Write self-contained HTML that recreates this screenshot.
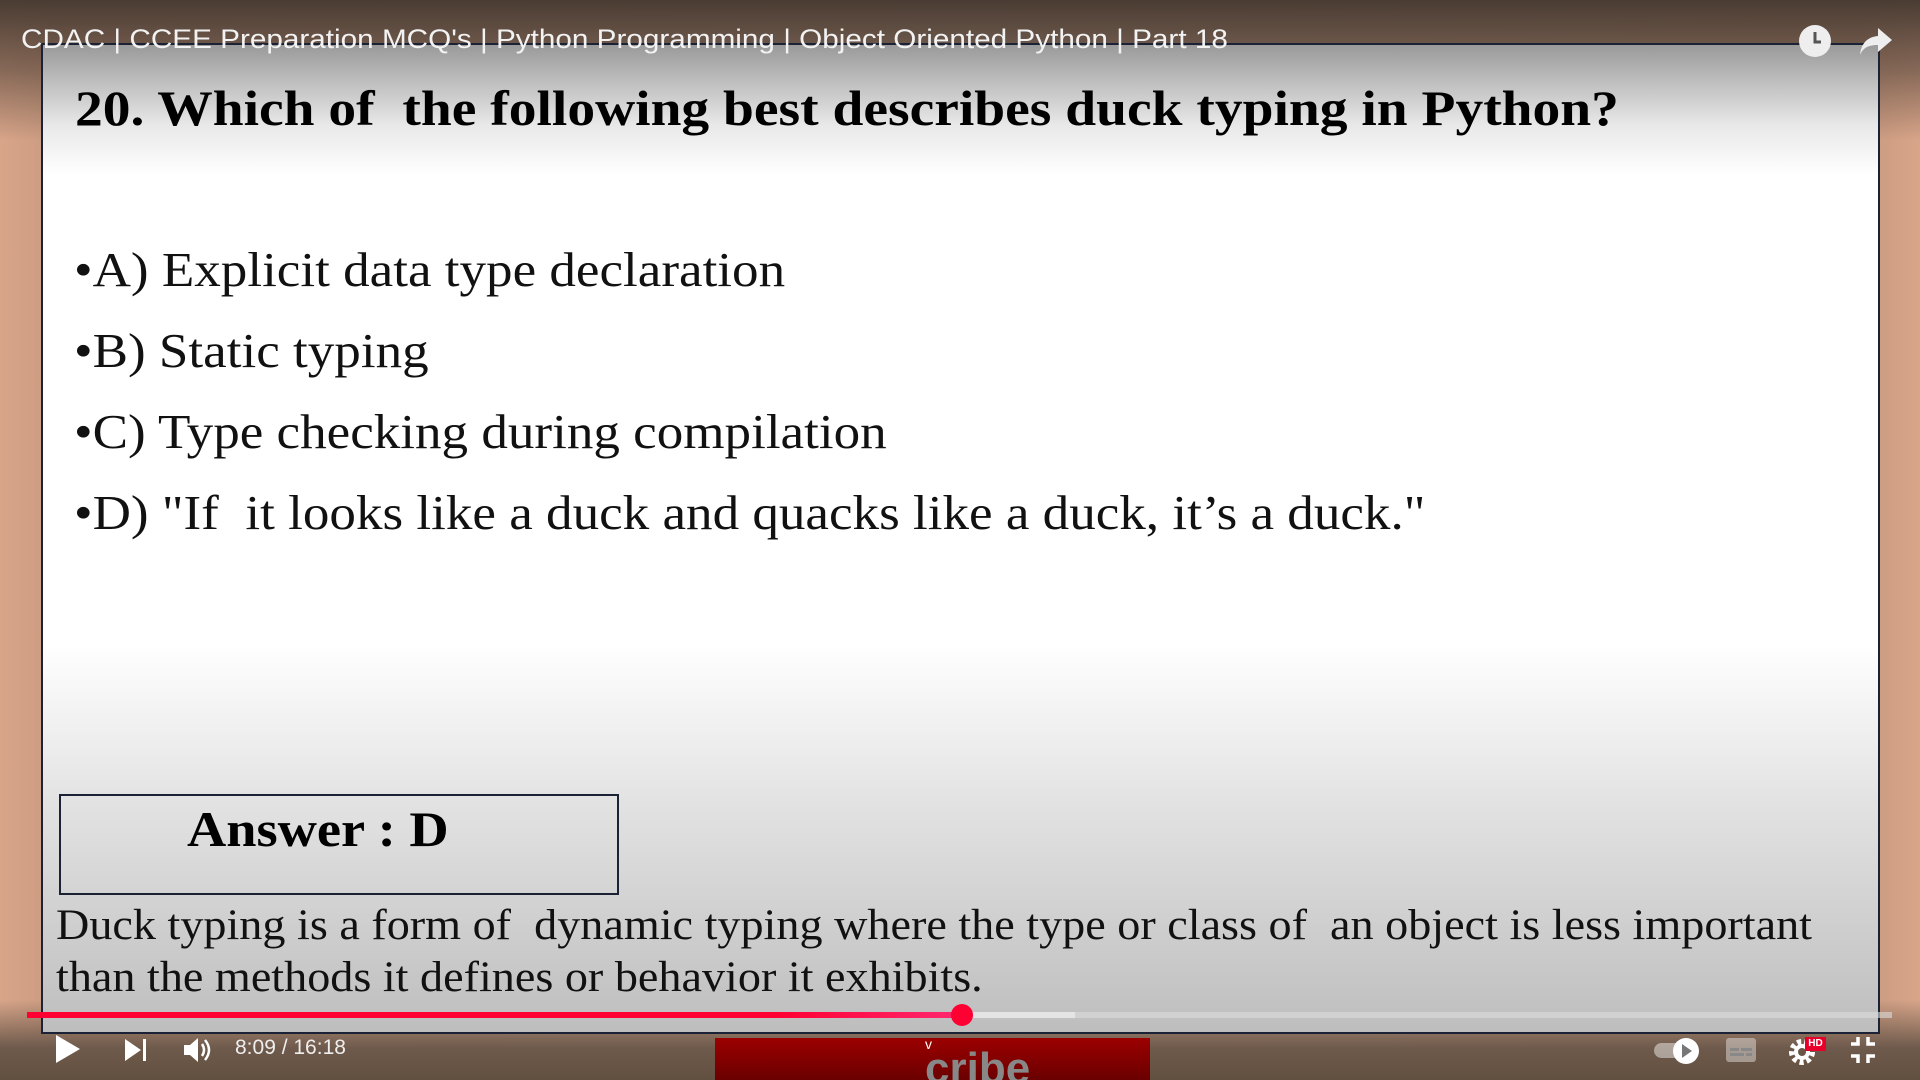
<!DOCTYPE html>
<html><head><meta charset="utf-8"><style>
html,body{margin:0;padding:0}
body{width:1920px;height:1080px;overflow:hidden;position:relative;font-family:"Liberation Serif",serif;
background:linear-gradient(90deg,#d8a589 0%,#c99a80 3%,#c2a08a 50%,#c89a80 97%,#d8a589 100%);}
.topfade{position:absolute;left:0;top:0;width:1920px;height:140px;background:linear-gradient(#4a3c33,rgba(80,64,54,0.6) 50%,rgba(80,64,54,0));}
.botfade{position:absolute;left:0;bottom:0;width:1920px;height:80px;background:linear-gradient(rgba(100,80,66,0),#6e5a4c 60%,#62503f);}
.slide{position:absolute;left:41px;top:43px;width:1839px;height:991px;border:2px solid #1c2236;box-sizing:border-box;
background:linear-gradient(#9a9a9a 0px,#e8e8e8 80px,#fff 130px,#fff 600px,#e2e2e2 760px,#bdbdbd 991px);}
.q{position:absolute;left:75px;top:79px;font-size:50px;font-weight:bold;color:#000;white-space:nowrap;transform:scaleX(1.11);transform-origin:0 0}
.opt{position:absolute;left:74px;font-size:49px;color:#111;white-space:nowrap;transform:scaleX(1.083);transform-origin:0 0}
.ans{position:absolute;left:59px;top:794px;width:560px;height:101px;border:2px solid #1c2236;box-sizing:border-box}
.ans span{position:absolute;left:126px;top:4px;font-size:50px;font-weight:bold;white-space:nowrap;transform:scaleX(1.087);transform-origin:0 0}
.exp{position:absolute;left:56px;font-size:43.5px;color:#111;white-space:nowrap;transform:scaleX(1.061);transform-origin:0 0}
.title{position:absolute;left:21px;top:24px;font-family:"Liberation Sans",sans-serif;font-size:27px;color:#f2f2f2;white-space:nowrap;transform:scaleX(1.1);transform-origin:0 0}
.bar{position:absolute;top:1012px;height:6px}
.time{position:absolute;left:235px;top:1036px;font-family:"Liberation Sans",sans-serif;font-size:21px;color:#eee}
.red{position:absolute;left:715px;top:1038px;width:435px;height:42px;background:linear-gradient(#9c0000,#6a0000);overflow:hidden}
</style></head><body>
<div class="topfade"></div><div class="botfade"></div>
<div class="slide"></div>
<div class="title">CDAC | CCEE Preparation MCQ's | Python Programming | Object Oriented Python | Part 18</div>
<svg style="position:absolute;left:1798px;top:24px" width="34" height="34" viewBox="0 0 34 34"><circle cx="17" cy="17" r="16" fill="#eee"/><path d="M17 8v10h6" stroke="#555" stroke-width="3" fill="none"/></svg>
<svg style="position:absolute;left:1858px;top:24px" width="36" height="34" viewBox="0 0 36 34"><path d="M20 4l14 12-14 12v-7C10 21 5 24 2 31c1-10 6-18 18-19z" fill="#eee"/></svg>
<div class="q">20. Which of &nbsp;the following best describes duck typing in Python?</div>
<div class="opt" style="top:241px">•A) Explicit data type declaration</div>
<div class="opt" style="top:322px">•B) Static typing</div>
<div class="opt" style="top:403px">•C) Type checking during compilation</div>
<div class="opt" style="top:484px">•D) "If &nbsp;it looks like a duck and quacks like a duck, it’s a duck."</div>
<div class="ans"><span>Answer : D</span></div>
<div class="exp" style="top:900px">Duck typing is a form of &nbsp;dynamic typing where the type or class of &nbsp;an object is less important</div>
<div class="exp" style="top:952px">than the methods it defines or behavior it exhibits.</div>
<div class="bar" style="left:27px;width:1865px;background:rgba(220,220,220,0.6)"></div>
<div class="bar" style="left:27px;width:1048px;background:#e4e4e4"></div>
<div class="bar" style="left:27px;width:936px;background:linear-gradient(90deg,#ff0033 80%,#ff2a70)"></div>
<div style="position:absolute;left:951px;top:1004px;width:22px;height:22px;border-radius:50%;background:#ff0033"></div>
<div class="red"><div style="position:absolute;left:210px;top:-2px;color:#fff;font-family:'Liberation Sans',sans-serif;font-size:14px">v</div><div style="position:absolute;left:210px;top:6px;color:#888;font-family:'Liberation Sans',sans-serif;font-size:44px;font-weight:bold">cribe</div></div>
<svg style="position:absolute;left:55px;top:1034px" width="26" height="30"><path d="M1 1l24 14-24 14z" fill="#fff"/></svg>
<svg style="position:absolute;left:124px;top:1038px" width="24" height="24"><path d="M1 1l16 11-16 11z" fill="#fff"/><rect x="19" y="1" width="3" height="22" fill="#fff"/></svg>
<svg style="position:absolute;left:183px;top:1036px" width="30" height="28"><path d="M1 9h6l8-7v24l-8-7H1z" fill="#fff"/><path d="M19 8q4 6 0 12M22 4q8 10 0 20" stroke="#fff" stroke-width="2.5" fill="none"/></svg>
<div class="time">8:09 / 16:18</div>
<svg style="position:absolute;left:1652px;top:1036px" width="50" height="30"><rect x="2" y="7" width="34" height="15" rx="7.5" fill="rgba(255,255,255,0.45)"/><circle cx="34" cy="15" r="13" fill="#fff"/><path d="M30 8l10 7-10 7z" fill="#777"/></svg>
<svg style="position:absolute;left:1726px;top:1038px" width="30" height="24"><rect x="0" y="0" width="30" height="24" rx="3" fill="rgba(255,255,255,0.4)"/><rect x="4" y="10" width="9" height="3" fill="#888"/><rect x="15" y="10" width="11" height="3" fill="#888"/><rect x="4" y="15" width="14" height="3" fill="#888"/><rect x="20" y="15" width="6" height="3" fill="#888"/></svg>
<svg style="position:absolute;left:1788px;top:1036px" width="30" height="30"><circle cx="14" cy="16" r="10" fill="none" stroke="#fff" stroke-width="6" stroke-dasharray="4 3"/><circle cx="14" cy="16" r="8" fill="#fff"/><circle cx="14" cy="16" r="4" fill="#6a5646"/></svg>
<div style="position:absolute;left:1805px;top:1037px;width:21px;height:14px;background:#e8002b;color:#fff;font:bold 10px 'Liberation Sans',sans-serif;text-align:center;line-height:14px">HD</div>
<svg style="position:absolute;left:1850px;top:1036px" width="26" height="28"><path d="M8 1v7H1M18 1v7h7M8 27v-7H1M18 27v-7h7" stroke="#fff" stroke-width="3.5" fill="none"/></svg>
</body></html>
